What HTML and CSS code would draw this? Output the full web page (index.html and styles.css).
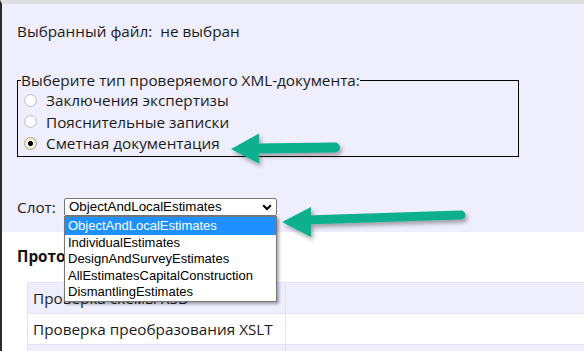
FILE: index.html
```html
<!DOCTYPE html>
<html lang="ru">
<head>
<meta charset="utf-8">
<link rel="stylesheet" href="styles.css">
</head>
<body>
<div class="page">
  <div class="panel">
    <div class="file-line">Выбранный файл:&nbsp; не выбран</div>
    <fieldset class="doc-type">
      <legend>Выберите тип проверяемого XML-документа:</legend>
      <label class="opt"><input type="radio" name="t"><span>Заключения экспертизы</span></label>
      <label class="opt"><input type="radio" name="t"><span>Пояснительные записки</span></label>
      <label class="opt"><input type="radio" name="t" checked><span>Сметная документация</span></label>
    </fieldset>
    <div class="slot-row">
      <span class="slot-label">Слот:</span>
      <div class="select">
        <span>ObjectAndLocalEstimates</span>
        <svg class="chev" width="10" height="7" viewBox="0 0 10 7"><path d="M1.2 1.2 L5 5 L8.8 1.2" fill="none" stroke="#000" stroke-width="2"/></svg>
        <ul class="dropdown">
          <li class="sel">ObjectAndLocalEstimates</li>
          <li>IndividualEstimates</li>
          <li>DesignAndSurveyEstimates</li>
          <li>AllEstimatesCapitalConstruction</li>
          <li>DismantlingEstimates</li>
        </ul>
      </div>
    </div>
  </div>
  <div class="report">
    <h3 class="report-title">Протокол проверки</h3>
    <table class="checks">
      <tr class="alt"><td class="c1">Проверка схемы XSD</td><td></td></tr>
      <tr><td class="c1">Проверка преобразования XSLT</td><td></td></tr>
      <tr class="alt"><td class="c1"></td><td></td></tr>
    </table>
  </div>
  <svg class="arrows" width="584" height="351" viewBox="0 0 584 351">
    <defs>
      <filter id="sh" x="-20%" y="-50%" width="140%" height="200%">
        <feDropShadow dx="2" dy="3" stdDeviation="2" flood-color="#000" flood-opacity="0.35"/>
      </filter>
    </defs>
    <g filter="url(#sh)" fill="#0fb08d" stroke="#0fb08d">
      <line x1="255" y1="148.5" x2="335" y2="147.5" stroke-width="10" stroke-linecap="round"/>
      <polygon points="231,149 259,133.5 259,163.5" stroke="none"/>
      <line x1="306" y1="220" x2="461" y2="215" stroke-width="9" stroke-linecap="round"/>
      <polygon points="282,222 311,207 311,237" stroke="none"/>
    </g>
  </svg>
</div>
</body>
</html>
```

FILE: styles.css
```css
html, body {
  margin: 0;
  padding: 0;
  background: #fff;
}
.page {
  position: relative;
  width: 584px;
  height: 351px;
  overflow: hidden;
  box-sizing: border-box;
  border-top: 4px solid #dedede;
  border-left: 2px solid #2a2a2a;
  font-family: "Open Sans", sans-serif;
  font-size: 15.3px;
  color: #1a1a1a;
}
.panel {
  background: #efeefd;
  padding: 16px 0 14px 15px;
}
.file-line {
  line-height: 22px;
}
.doc-type {
  margin: 27px 0 0 0;
  width: 502px;
  box-sizing: border-box;
  border: 1px solid #000;
  padding: 0 0 0 3px;
}
.doc-type legend {
  padding: 0;
  line-height: 22px;
}
.opt {
  display: flex;
  align-items: center;
  height: 21.5px;
  line-height: 21.5px;
}
.opt span {
  position: relative;
  top: -1px;
}
.opt input {
  appearance: none;
  -webkit-appearance: none;
  width: 13px;
  height: 13px;
  margin: -3px 9px 0 3px;
  border: 1px solid #c4c4c4;
  border-radius: 50%;
  background: radial-gradient(circle, #fff 0 3px, #f1f1f1 6px);
  box-sizing: border-box;
}
.opt input:checked {
  border-color: #b3a887;
  background: radial-gradient(circle, #000 0 2.2px, #fff 2.8px 3.6px, #efe4c6 4.2px);
}
.slot-row {
  display: flex;
  align-items: center;
  margin-top: 39px;
  height: 22px;
}
.slot-label {
  width: 47px;
}
.select {
  position: relative;
  width: 213px;
  height: 18px;
  box-sizing: border-box;
  border: 1px solid #767676;
  border-radius: 2px;
  background: #fff;
  font-family: "Liberation Sans", Arial, sans-serif;
  font-size: 13.33px;
  color: #000;
  display: flex;
  align-items: center;
  padding-left: 4px;
}
.chev {
  position: absolute;
  right: 4px;
  top: 5px;
}
.dropdown {
  position: absolute;
  left: -1px;
  top: 17px;
  width: 213px;
  margin: 0;
  padding: 0;
  list-style: none;
  box-sizing: border-box;
  border: 1px solid #767676;
  background: #fff;
  box-shadow: 2px 2px 3px rgba(0, 0, 0, 0.35);
  z-index: 2;
  font-size: 13px;
}
.dropdown li {
  height: 16.6px;
  line-height: 16.6px;
  padding-left: 3px;
  white-space: nowrap;
}
.dropdown li.sel {
  background: #1e90ff;
  color: #fff;
  height: 18px;
  line-height: 18px;
}
.report {
  padding: 13px 0 0 15px;
}
.report-title {
  margin: 0;
  font-size: 15.3px;
  line-height: 22px;
  font-weight: 700;
  color: #111;
}
.checks {
  margin: 15px 0 0 10px;
  border-collapse: collapse;
  width: 620px;
}
.checks td {
  height: 31px;
  box-sizing: border-box;
  border: 1px solid #e2e2f6;
  padding: 0 0 0 5px;
  white-space: nowrap;
}
.checks td.c1 {
  width: 258px;
}
.checks tr.alt td {
  background: #efeefd;
}
.arrows {
  position: absolute;
  left: -2px;
  top: -4px;
  pointer-events: none;
  z-index: 3;
}
```
